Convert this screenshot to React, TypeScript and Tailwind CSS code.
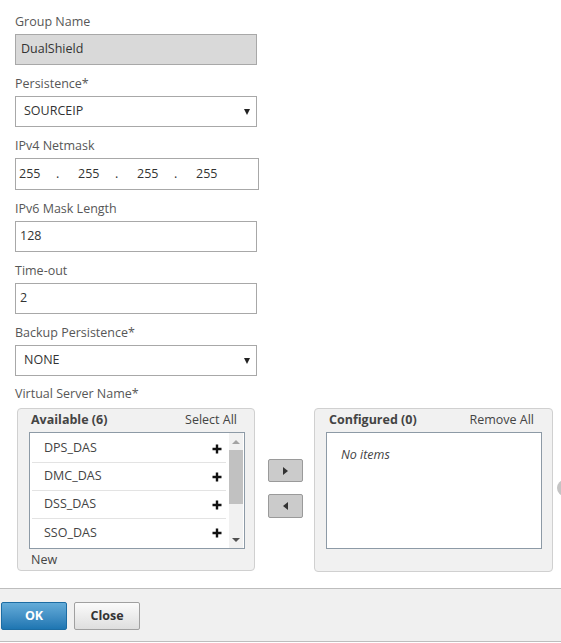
import React from 'react'

const font = { fontFamily: '"Open Sans", "Noto Sans", sans-serif' }

function Label({ children }: { children: React.ReactNode }) {
  return <div className="text-[12.5px] leading-[18px] text-[#575757] mb-[3px]">{children}</div>
}

function Select({ value }: { value: string }) {
  return (
    <div className="w-[242px] h-[31px] border border-[#a8a8a8] bg-white flex items-center justify-between pl-[8px] pr-[6px]">
      <span className="text-[12.5px] text-[#333]">{value}</span>
      <span className="w-0 h-0 border-l-[3.5px] border-r-[3.5px] border-t-[6px] border-l-transparent border-r-transparent border-t-[#222]" />
    </div>
  )
}

function TextInput({ value, disabled }: { value: string; disabled?: boolean }) {
  return (
    <div
      className={`w-[242px] h-[31px] border border-[#a8a8a8] flex items-center px-[4px] text-[12.5px] text-[#333] ${
        disabled ? 'bg-[#d9d9d9] pl-[5px]' : 'bg-white'
      }`}
    >
      {value}
    </div>
  )
}

const items = ['DPS_DAS', 'DMC_DAS', 'DSS_DAS', 'SSO_DAS']

export default function App() {
  return (
    <div className="relative w-[561px] h-[643px] bg-white overflow-hidden flex flex-col" style={font}>
      <div className="flex-1 pl-[15px] pt-[13px]">
        <div className="flex flex-col gap-[10px]">
          <div>
            <Label>Group Name</Label>
            <TextInput value="DualShield" disabled />
          </div>
          <div>
            <Label>Persistence*</Label>
            <Select value="SOURCEIP" />
          </div>
          <div>
            <Label>IPv4 Netmask</Label>
            <div className="w-[244px] h-[32px] border border-[#a8a8a8] bg-white flex items-center pl-[3px] text-[12.5px] text-[#333]">
              <span className="w-[37px]">255</span>
              <span className="w-[22px]">.</span>
              <span className="w-[37px]">255</span>
              <span className="w-[22px]">.</span>
              <span className="w-[37px]">255</span>
              <span className="w-[22px]">.</span>
              <span>255</span>
            </div>
          </div>
          <div>
            <Label>IPv6 Mask Length</Label>
            <TextInput value="128" />
          </div>
          <div>
            <Label>Time-out</Label>
            <TextInput value="2" />
          </div>
          <div>
            <Label>Backup Persistence*</Label>
            <Select value="NONE" />
          </div>
          <div>
            <div className="text-[12.5px] leading-[18px] text-[#575757] mb-[5px] -mt-[1px]">Virtual Server Name*</div>
            <div className="flex items-start">
              {/* available */}
              <div className="ml-[2px] w-[238px] h-[163px] border border-[#d0d0d0] rounded-[4px] bg-[#f1f1f1] flex flex-col">
                <div className="h-[23px] flex items-center justify-between pl-[13px] pr-[17px] text-[12.5px] text-[#444]">
                  <span className="font-bold">Available (6)</span>
                  <span>Select All</span>
                </div>
                <div className="ml-[11px] w-[216px] h-[117px] border border-[#8d9aa6] bg-white flex">
                  <div className="flex-1 pt-[2px] pl-[2px]">
                    {items.map((it, i) => (
                      <div
                        key={it}
                        className={`h-[28px] flex items-center justify-between pl-[12px] pr-[4px] text-[12.5px] text-[#444] ${
                          i < 3 ? 'border-b border-[#e3e3e3]' : ''
                        }`}
                      >
                        <span>{it}</span>
                        <svg width="10" height="10" viewBox="0 0 10 10">
                          <path d="M3.8 0.5h2.4v3.3h3.3v2.4h-3.3v3.3h-2.4v-3.3h-3.3v-2.4h3.3z" fill="#111" />
                        </svg>
                      </div>
                    ))}
                  </div>
                  <div className="w-[14px] ml-[3px] mr-[1px] bg-[#f1f1f1] flex flex-col items-center">
                    <div className="h-[17px] flex items-center justify-center">
                      <span className="w-0 h-0 border-l-[4px] border-r-[4px] border-b-[4px] border-l-transparent border-r-transparent border-b-[#a3a3a3]" />
                    </div>
                    <div className="w-[14px] h-[54px] bg-[#c1c1c1]" />
                    <div className="flex-1" />
                    <div className="h-[16px] flex items-center justify-center">
                      <span className="w-0 h-0 border-l-[4px] border-r-[4px] border-t-[4px] border-l-transparent border-r-transparent border-t-[#505050]" />
                    </div>
                  </div>
                </div>
                <div className="flex-1 flex items-center pl-[13px] pt-[1px] text-[12.5px] text-[#444]">New</div>
              </div>
              {/* arrows */}
              <div className="w-[59px] flex flex-col items-start gap-[12px] pt-[51px] pl-[13px]">
                <button className="w-[35px] h-[23px] bg-[#cbcbcb] border border-[#9a9a9a] rounded-[2px] flex items-center justify-center">
                  <span className="w-0 h-0 border-t-[4px] border-b-[4px] border-l-[5px] border-t-transparent border-b-transparent border-l-[#333]" />
                </button>
                <button className="w-[35px] h-[24px] bg-[#cbcbcb] border border-[#9a9a9a] rounded-[2px] flex items-center justify-center">
                  <span className="w-0 h-0 border-t-[4px] border-b-[4px] border-r-[5px] border-t-transparent border-b-transparent border-r-[#333]" />
                </button>
              </div>
              {/* configured */}
              <div className="w-[239px] h-[164px] border border-[#d0d0d0] rounded-[4px] bg-[#f1f1f1] flex flex-col">
                <div className="h-[23px] flex items-center justify-between pl-[14px] pr-[18px] text-[12.5px] text-[#444]">
                  <span className="font-bold">Configured (0)</span>
                  <span>Remove All</span>
                </div>
                <div className="ml-[11px] w-[216px] h-[117px] border border-[#8d9aa6] bg-white pl-[14px] pt-[8px]">
                  <span className="text-[12.5px] italic text-[#444]">No items</span>
                </div>
              </div>
            </div>
          </div>
        </div>
      </div>
      <div className="absolute right-[-12px] top-[480px] w-[16px] h-[16px] rounded-full bg-[#c4c4c4]" />
      {/* footer */}
      <div className="h-[54px] mb-[1px] border-t border-b border-[#bdbdbd] bg-[#f0f0f0] flex items-start pt-[13px] pl-[1px] gap-[7px]">
        <button className="w-[66px] h-[28px] rounded-[2px] border border-[#1c6ca3] bg-gradient-to-b from-[#64acd9] to-[#1e76b2] text-white text-[12.5px] font-bold">
          OK
        </button>
        <button className="w-[66px] h-[28px] rounded-[2px] border border-[#a0a0a0] bg-gradient-to-b from-[#fbfbfb] to-[#dedede] text-[#333] text-[12.5px] font-bold">
          Close
        </button>
      </div>
    </div>
  )
}
